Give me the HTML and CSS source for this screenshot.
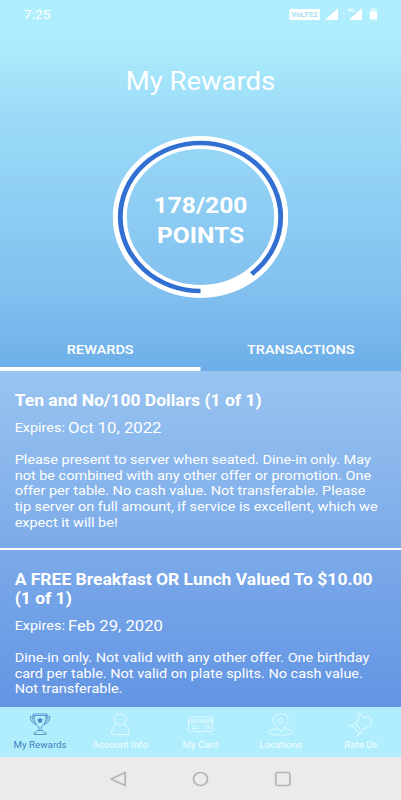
FILE: index.html
```html
<!DOCTYPE html>
<html lang="en">
  <head>
    <meta charset="UTF-8" />
    <meta name="viewport" content="width=device-width, initial-scale=1.0" />
    <title>My Rewards</title>
    <link rel="stylesheet" href="styles.css">
  </head>
  <body>
    <div class="screen">
      <header class="status-bar">
        <span class="time">7:25</span>
        <div class="status-icons">
          <span class="volte">VoLTE2</span>
          <svg class="signal" width="12" height="12" viewBox="0 0 12 12"><path d="M12 0v12H0z" /></svg>
          <span class="network">:</span>
          <div class="signal-4g">
            <svg width="12" height="12" viewBox="0 0 12 12"><path d="M12 0v12H0z" /></svg>
            <span>4G</span>
          </div>
          <svg class="battery" width="7" height="12" viewBox="0 0 7 12"><path opacity=".5" d="M2 0h3v1.500h2V4H0V1.500h2z" /><path d="M0 4h7v7.500H0z" /></svg>
        </div>
      </header>

      <h1>My Rewards</h1>

      <div class="progress">
        <svg width="162" height="162" viewBox="0 0 162 162">
          <circle class="track" cx="81" cy="81" r="74.500" />
          <circle class="bar" cx="81" cy="81" r="74" pathLength="200" stroke-dasharray="178 22" transform="rotate(90 81 81)" />
        </svg>
        <p class="points">178/200<br>POINTS</p>
      </div>

      <nav class="tabs">
        <a class="tab active">REWARDS</a>
        <a class="tab">TRANSACTIONS</a>
      </nav>

      <main class="rewards">
        <article class="reward">
          <h2>Ten and No/100 Dollars (1 of 1)</h2>
          <p class="expires">Expires: <span>Oct 10, 2022</span></p>
          <p class="details">Please present to server when seated. Dine-in only. May<br>not be combined with any other offer or promotion. One<br>offer per table. No cash value. Not transferable. Please<br>tip server on full amount, if service is excellent, which we<br>expect it will be!</p>
        </article>
        <article class="reward">
          <h2>A FREE Breakfast OR Lunch Valued To $10.00<br>(1 of 1)</h2>
          <p class="expires">Expires: <span>Feb 29, 2020</span></p>
          <p class="details">Dine-in only. Not valid with any other offer. One birthday<br>card per table. Not valid on plate splits. No cash value.<br>Not transferable.</p>
        </article>
      </main>

      <nav class="bottom-nav">
        <a class="nav-item active">
          <svg width="24" height="24" viewBox="0 0 24 24">
            <path d="M5.500 2h13v1.500h-13zM6.500 3.500c0 6 1.500 10 4.500 11.500v3.500M17.500 3.500c0 6-1.500 10-4.500 11.500v3.500M6.500 4.500H3c0 4.500 2 7 5.500 8M17.500 4.500H21c0 4.500-2 7-5.500 8M6.700 6H4.600c.3 2.500 1.400 4 3.100 4.800M17.300 6h2.100c-.3 2.500-1.400 4-3.100 4.800M9.500 18.500h5l1.500 2.500h1.500v1.500h-11V21H8z" />
            <path class="solid" d="m12 6 .7 1.500 1.600.2-1.200 1.200.3 1.600-1.400-.8-1.400.8.3-1.600-1.200-1.200 1.600-.2z" />
          </svg>
          <span>My Rewards</span>
        </a>
        <a class="nav-item">
          <svg width="24" height="24" viewBox="0 0 24 24">
            <circle cx="12" cy="7.500" r="5.500" />
            <path d="M8.500 12.500C5.500 14 4 16.500 4 20v1.500c0 .6.400 1 1 1h14c.6 0 1-.4 1-1V20c0-3.500-1.500-6-4.500-7.500" />
          </svg>
          <span>Account Info</span>
        </a>
        <a class="nav-item">
          <svg width="24" height="24" viewBox="0 0 24 24">
            <rect x="1" y="5" width="22" height="14.500" rx="1.500" />
            <path d="M1 8h22M1 10.200h22M4 14h6M4 16.500h6" />
            <circle cx="18.500" cy="15" r="1.700" />
          </svg>
          <span>My Card</span>
        </a>
        <a class="nav-item">
          <svg width="24" height="24" viewBox="0 0 24 24">
            <path d="M12 20C9 15 5 12 5 8.500a7 7 0 0 1 14 0C19 12 15 15 12 20z" />
            <circle cx="12" cy="8.500" r="2.300" />
            <path d="M8 17c-4 .4-7 1.300-7 3 0 2 5 3 11 3s11-1 11-3c0-1.700-3-2.600-7-3" />
          </svg>
          <span>Locations</span>
        </a>
        <a class="nav-item">
          <svg width="24" height="24" viewBox="0 0 24 24">
            <path d="M7.500 11.500c.5-2.500 1.500-3.500 3.300-4L9.300 3.500c-.3-2 2-2.500 2.800-1L14.500 6l4-1.500c1.800-.4 2.600 1 1.600 2.200 1.600 0 2 1.600 1 2.600 1.100.8.800 2.300-.5 2.700.4 1.400-.6 2.300-1.900 2.200-.2 1.300-1.200 1.900-2.700 1.900L13 17M4 13l3-2 6 9-2.500 2M4 13l-3.500 1.500M4 13l6.500 9-2 1.500" />
          </svg>
          <span>Rate Us</span>
        </a>
      </nav>

      <footer class="system-nav">
        <svg width="76" height="16" viewBox="0 0 76 16"><path d="M44.500 1.500v13L31.500 8z" /></svg>
        <svg width="76" height="16" viewBox="0 0 76 16"><circle cx="38" cy="8" r="6.500" /></svg>
        <svg width="76" height="16" viewBox="0 0 76 16"><rect x="31.500" y="1.500" width="13" height="13" rx="1.500" /></svg>
      </footer>
    </div>
  </body>
</html>
```

FILE: styles.css
```css
* {
  box-sizing: border-box;
  margin: 0;
}
body {
  overflow: hidden;
  font-family: Roboto, Arial, sans-serif;
}
/* 370px layout stretched to the 401px window */
.screen {
  display: flex;
  flex-direction: column;
  width: 370px;
  height: 800px;
  transform: scaleX(1.0838);
  transform-origin: 0 0;
  color: white;
  background: linear-gradient(#b1eefd 0, #b1eefd 28px, #a9e9fb 60px, #9cdcf8 110px, #82c0ef 290px, #6daee9 371px);
}
.status-bar {
  display: flex;
  justify-content: space-between;
  height: 28px;
  padding: 0 22px;
  align-items: center;
}
.time {
  font-size: 12.8px;
}
.status-icons {
  display: flex;
  align-items: center;
}
.volte {
  width: 28px;
  height: 11px;
  background: white;
  color: #a5dff0;
  font-size: 7.3px;
  font-weight: bold;
  line-height: 11px;
  text-align: center;
}
.status-icons svg {
  display: block;
  fill: white;
}
.signal {
  margin-left: 5px;
}
.network {
  width: 10px;
  font-size: 8px;
  text-align: center;
}
.signal-4g {
  position: relative;
}
.signal-4g span {
  position: absolute;
  top: -2px;
  left: -2px;
  font-size: 6px;
}
.battery {
  margin-left: 7px;
}
h1 {
  margin-top: 39px;
  font-size: 25.3px;
  font-weight: normal;
  line-height: 30px;
  text-align: center;
}
.progress {
  display: grid;
  place-items: center;
  height: 162px;
  margin-top: 39px;
}
.progress svg,
.points {
  grid-area: 1 / 1;
}
.progress circle {
  fill: none;
}
.track {
  stroke: white;
  stroke-width: 13;
}
.bar {
  stroke: #316fd3;
  stroke-width: 4.5;
}
.points {
  padding-top: 8px;
  font-size: 22.7px;
  font-weight: bold;
  line-height: 30px;
  text-align: center;
}
.tabs {
  display: flex;
  height: 43px;
  margin-top: 30px;
}
.tab {
  flex: 1;
  font-size: 13.4px;
  font-weight: 500;
  line-height: 43px;
  text-align: center;
}
.tab.active {
  border-bottom: 4px solid white;
}
.rewards {
  flex: 1;
  overflow: hidden;
  background: linear-gradient(#98c4f0 0, #6294e3 100%);
}
.reward {
  padding: 20px 13.5px 0;
}
.reward:first-child {
  height: 179px;
  border-bottom: 2px solid white;
}
.reward h2 {
  font-size: 16.15px;
  font-weight: bold;
  line-height: 19px;
  white-space: nowrap;
}
.expires {
  margin-top: 7px;
  font-size: 13.3px;
  line-height: 20px;
}
.expires span {
  position: relative;
  top: 1px;
  left: -0.5px;
  font-size: 15.4px;
}
.details {
  margin-top: 14px;
  font-size: 13.36px;
  line-height: 15.7px;
  white-space: nowrap;
}
.bottom-nav {
  display: flex;
  height: 50px;
  background: #b1eefd;
}
.nav-item {
  flex: 1;
  display: flex;
  flex-direction: column;
  align-items: center;
  padding-top: 5px;
  font-size: 9px;
  line-height: 14px;
  color: #f4fdff;
}
.nav-item span {
  margin-top: 2px;
}
.nav-item svg {
  fill: none;
  stroke: currentColor;
  stroke-width: 0.7;
}
.nav-item.active {
  color: #3f7fbd;
}
.nav-item .solid {
  fill: currentColor;
}
.system-nav {
  display: flex;
  justify-content: center;
  align-items: center;
  height: 43px;
  background: #ebebeb;
}
.system-nav svg {
  fill: none;
  stroke: #b5b5b5;
  stroke-width: 1.7;
  stroke-linejoin: round;
}
```
